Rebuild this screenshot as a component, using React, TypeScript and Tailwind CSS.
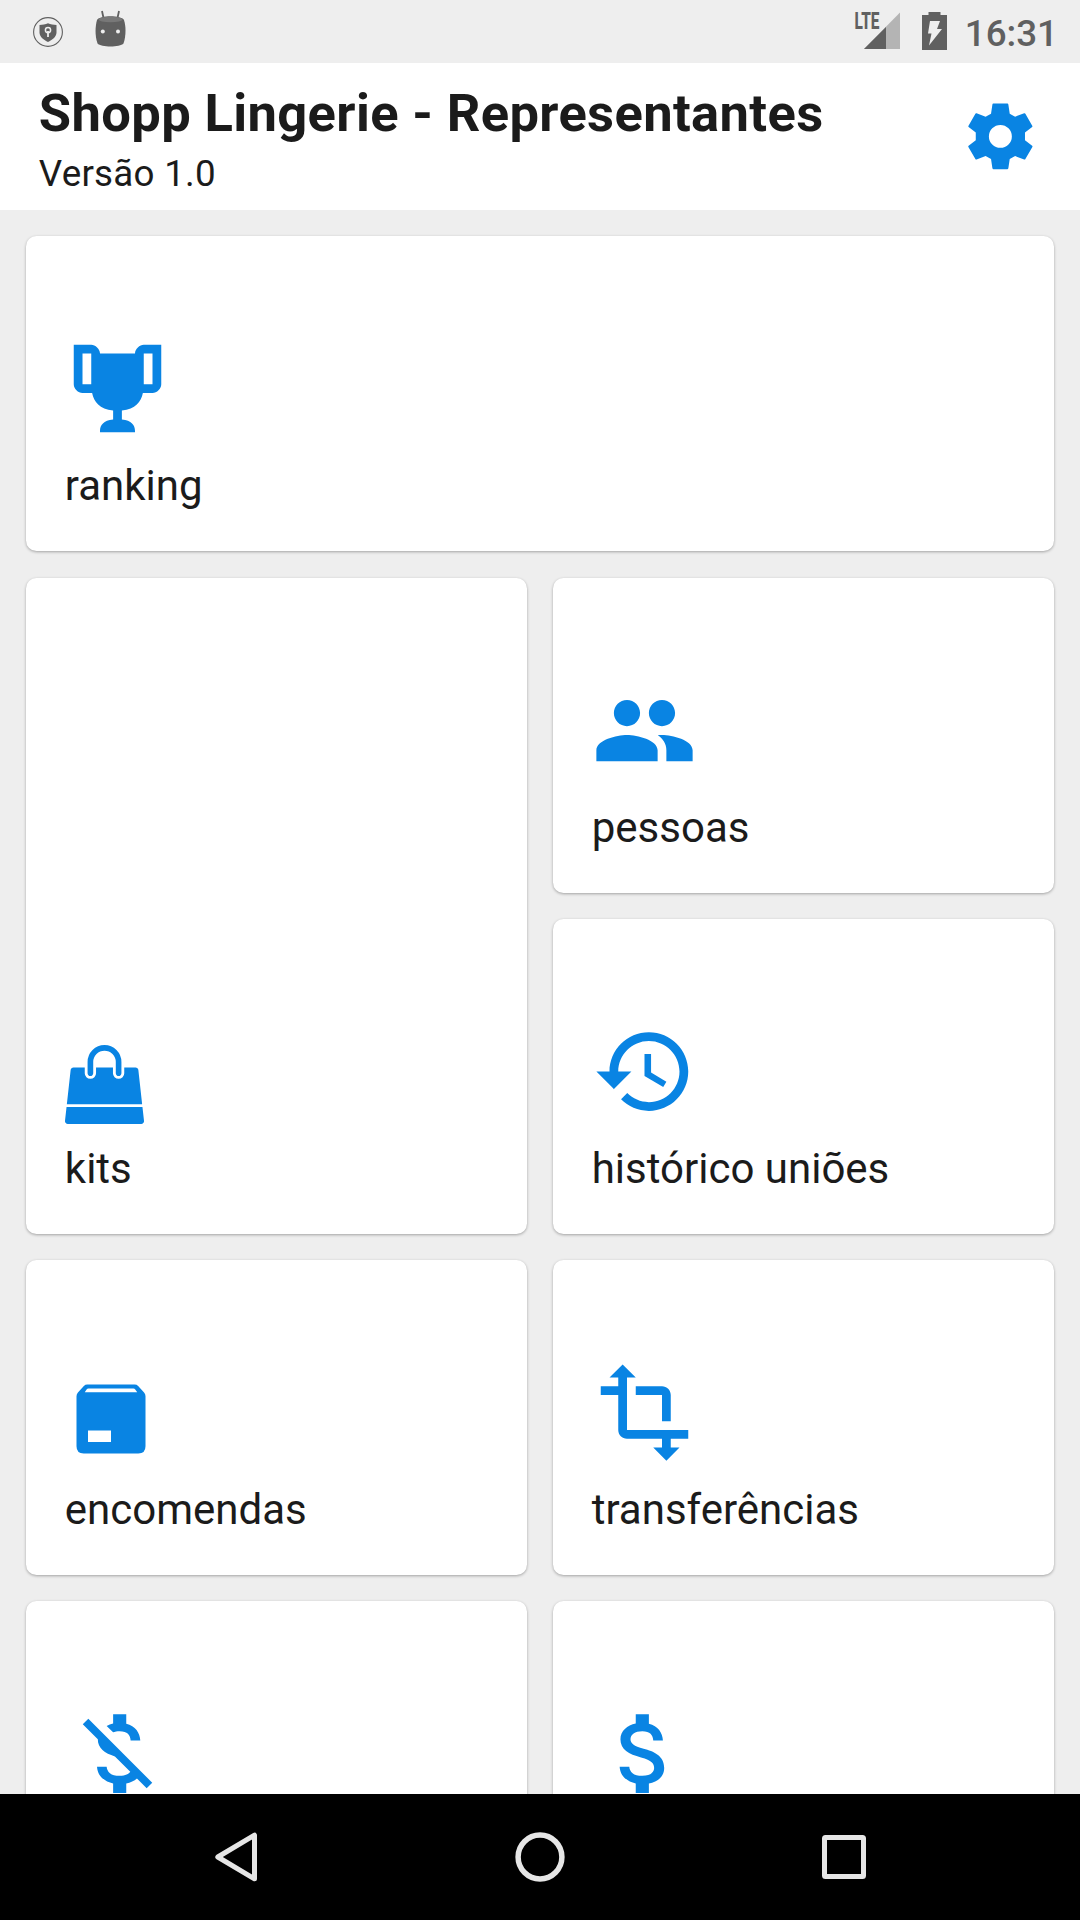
import type { ReactNode } from "react";

type IconProps = {
  d: string;
  viewBox?: string;
  className?: string;
};

type Tile = {
  label: string;
  icon: ReactNode;
  className?: string;
};

function Icon({ d, viewBox = "0 0 24 24", className = "size-[105px]" }: IconProps) {
  return (
    <svg className={className} viewBox={viewBox} fill="currentColor" aria-hidden="true">
      <path fillRule="evenodd" d={d} />
    </svg>
  );
}

const paths = {
  settings:
    "M9.85 2H14.15Q14.4 2 14.43 2.25L14.85 5.1L16.5 6L19.25 4.95Q19.5 4.85 19.62 5.08L21.75 8.8Q21.85 9 21.68 9.15L19.5 10.85V13.15L21.68 14.85Q21.85 15 21.75 15.2L19.62 18.92Q19.5 19.15 19.25 19.05L16.5 18L14.85 18.9L14.43 21.75Q14.4 22 14.15 22H9.85Q9.6 22 9.57 21.75L9.15 18.9L7.5 18L4.75 19.05Q4.5 19.15 4.38 18.92L2.25 15.2Q2.15 15 2.32 14.85L4.5 13.15V10.85L2.32 9.15Q2.15 9 2.25 8.8L4.38 5.08Q4.5 4.85 4.75 4.95L7.5 6L9.15 5.1L9.57 2.25Q9.6 2 9.85 2ZM12 8.5A3.5 3.5 0 0 0 12 15.5A3.5 3.5 0 0 0 12 8.5Z",
  trophy:
    "M18,2C17.1,2 16,3 16,4H8C8,3 6.9,2 6,2H2V11C2,12 3,13 4,13H6.2C6.6,15 7.9,16.7 11,17V19.1C8.8,19.3 8,20.4 8,21.7V22H16V21.7C16,20.4 15.2,19.3 13,19.1V17C16.1,16.7 17.4,15 17.8,13H20C21,13 22,12 22,11V2H18M4,11V4H6V11H4M20,11H18V4H20V11Z",
  people:
    "M16 11c1.66 0 2.99-1.34 2.99-3S17.66 5 16 5c-1.66 0-3 1.34-3 3s1.34 3 3 3zm-8 0c1.66 0 2.99-1.34 2.99-3S9.66 5 8 5C6.34 5 5 6.34 5 8s1.34 3 3 3zm0 2c-2.33 0-7 1.17-7 3.5V19h14v-2.5c0-2.33-4.67-3.5-7-3.5zm8 0c-.29 0-.62.02-.97.05 1.16.84 1.97 1.97 1.97 3.45V19h6v-2.5c0-2.33-4.67-3.5-7-3.5z",
  history:
    "M13 3c-4.97 0-9 4.03-9 9H1l3.89 3.89.07.14L9 12H6c0-3.87 3.13-7 7-7s7 3.13 7 7-3.13 7-7 7c-1.93 0-3.68-.79-4.94-2.06l-1.42 1.42C8.27 19.99 10.51 21 13 21c4.97 0 9-4.03 9-9s-4.03-9-9-9zm-1 5v5l4.28 2.54.72-1.21-3.5-2.08V8H12z",
  bag:
    "M1757 1408l35 313q3 28-16 50-19 21-48 21h-1664q-29 0-48-21-19-22-16-50l35-313h1722zm-93-839l86 775h-1708l86-775q3-24 21-40.5t43-16.5h256v128q0 53 37.5 90.5t90.5 37.5 90.5-37.5 37.5-90.5v-128h384v128q0 53 37.5 90.5t90.5 37.5 90.5-37.5 37.5-90.5v-128h256q25 0 43 16.5t21 40.5zm-384-185v256q0 26-19 45t-45 19-45-19-19-45v-256q0-106-75-181t-181-75-181 75-75 181v256q0 26-19 45t-45 19-45-19-19-45v-256q0-159 112.5-271.5t271.5-112.5 271.5 112.5 112.5 271.5z",
  box:
    "M124 64H388Q399 64 407 72L440 108Q448 117 448 130V408Q448 448 408 448H104Q64 448 64 408V130Q64 117 72 108L105 72Q113 64 124 64ZM130 86Q124 86 120 92L110 107H402L391 92Q387 86 381 86ZM128 320V384H256V320Z",
  transform:
    "M22 18v-2H8V4h2L7 1 4 4h2v2H2v2h4v8c0 1.1.9 2 2 2h8v2h-2l3 3 3-3h-2v-2h4zM10 8h6v6h2V8c0-1.1-.9-2-2-2h-6v2z",
  moneyOff:
    "M12.5 6.9c1.78 0 2.44.85 2.5 2.1h2.21c-.07-1.72-1.12-3.3-3.21-3.81V3h-3v2.16c-.53.12-1.03.3-1.48.54l1.47 1.47c.41-.17.91-.27 1.51-.27zM5.33 4.06L4.06 5.33 7.5 8.77c0 2.08 1.56 3.21 3.91 3.91l3.51 3.51c-.34.48-1.05.91-2.42.91-2.06 0-2.87-.92-2.98-2.1h-2.2c.12 2.19 1.76 3.42 3.68 3.83V21h3v-2.15c.96-.18 1.82-.55 2.45-1.12l2.22 2.22 1.27-1.27L5.33 4.06z",
  money:
    "M11.8 10.9c-2.27-.59-3-1.2-3-2.15 0-1.09 1.01-1.85 2.7-1.85 1.78 0 2.44.85 2.5 2.1h2.21c-.07-1.72-1.12-3.3-3.21-3.81V3h-3v2.16c-1.94.42-3.5 1.68-3.5 3.61 0 2.31 1.91 3.46 4.7 4.13 2.5.6 3 1.48 3 2.41 0 .69-.49 1.79-2.7 1.79-2.06 0-2.87-.92-2.98-2.1h-2.2c.12 2.19 1.76 3.42 3.68 3.83V21h3v-2.15c1.95-.37 3.5-1.5 3.5-3.55 0-2.84-2.43-3.81-4.7-4.4z",
};

const tiles: Tile[] = [
  { label: "ranking", icon: <Icon d={paths.trophy} />, className: "col-span-2" },
  {
    label: "kits",
    icon: <Icon d={paths.bag} viewBox="0 0 1792 1792" className="size-[79px]" />,
    className: "row-span-2",
  },
  { label: "pessoas", icon: <Icon d={paths.people} /> },
  { label: "histórico uniões", icon: <Icon d={paths.history} /> },
  {
    label: "encomendas",
    icon: <Icon d={paths.box} viewBox="0 0 512 512" className="size-[92px]" />,
  },
  { label: "transferências", icon: <Icon d={paths.transform} /> },
  { label: "", icon: <Icon d={paths.moneyOff} /> },
  { label: "", icon: <Icon d={paths.money} /> },
];

function StatusBar() {
  return (
    <div className="flex h-[63px] shrink-0 items-start justify-between bg-[#eeeeee] text-[#606060]">
      <div className="flex gap-8 pt-[10px] pl-[33px]">
        <svg className="mt-[7px] size-[30px]" viewBox="0 0 30 30">
          <circle cx="15" cy="15" r="14.4" fill="none" stroke="currentColor" strokeWidth="1.1" />
          <path
            d="M15 6.3C12.5 7.6 9.5 8 6.5 8v7.5c0 4.5 4.5 7.5 8.5 9.6 4-2.1 8.5-5.1 8.5-9.6V8c-3 0-6-.4-8.5-1.7z"
            fill="currentColor"
          />
          <circle cx="15" cy="13" r="2.6" fill="none" stroke="#eeeeee" strokeWidth="1.5" />
          <path d="M15 14v6" stroke="#eeeeee" strokeWidth="1.8" />
        </svg>
        <svg className="h-[37px] w-[31px]" viewBox="0 0 31 37">
          <path d="M7 1l1.5 7M24 1l-1.5 7" stroke="currentColor" strokeWidth="1.8" />
          <path
            d="M2 10C5 5 26 5 29 10c2.2 7 2 16-.5 23.5C25 37.5 6 37.5 2.5 33.5 0 26 0 17 2 10z"
            fill="currentColor"
          />
          <ellipse cx="15.5" cy="9.5" rx="12" ry="2.8" fill="#787878" />
          <circle cx="7.8" cy="21.5" r="2" fill="#eeeeee" />
          <circle cx="23" cy="21.5" r="2" fill="#eeeeee" />
        </svg>
      </div>
      <div className="flex pr-[22px]">
        <svg className="h-[52px] w-[50px]" viewBox="-2 -10 50 52">
          <path d="M46 2.5V39H10z" fill="#b4b4b4" />
          <path d="M32 17v22H10z" fill="currentColor" />
          <text
            x="0.5"
            y="19"
            fill="currentColor"
            fontFamily="Roboto, sans-serif"
            fontSize="23"
            fontWeight="800"
            textLength="25"
            lengthAdjust="spacingAndGlyphs"
          >
            LTE
          </text>
        </svg>
        <svg className="mt-3 ml-[20px] h-[38px] w-[25px]" viewBox="0 0 25 38">
          <path d="M6.5 0h12v3H25v35H0V3h6.5z" fill="currentColor" />
          <path d="M8 9h10l-3 8h5L7 33.5l2.500-12H6z" fill="#eeeeee" />
        </svg>
        <span className="mt-[11px] ml-[18px] text-[36.75px] leading-[45px] font-medium">16:31</span>
      </div>
    </div>
  );
}

function Header() {
  return (
    <header className="flex h-[147px] shrink-0 items-center justify-between bg-white pr-10 pl-[38.8px]">
      <div className="pt-1">
        <h1 className="text-[52.5px] leading-[62px] font-bold tracking-[0.36px]">
          Shopp Lingerie - Representantes
        </h1>
        <p className="mt-2 text-[36.75px] leading-[44px] tracking-[0.25px]">Versão 1.0</p>
      </div>
      <button type="button" aria-label="settings" className="text-[#0984e3]">
        <Icon d={paths.settings} className="size-[78.75px]" />
      </button>
    </header>
  );
}

function TileCard({ label, icon, className = "" }: Tile) {
  return (
    <button
      type="button"
      className={`flex flex-col items-start justify-end rounded-[10.5px] bg-white pb-[40px] pl-[38.6px] text-left shadow-[0_1px_3px_rgba(0,0,0,0.32)] ${className}`}
    >
      <span className="text-[#0984e3]">{icon}</span>
      <span className="mt-5 h-[50px] text-[42px] leading-[50px]">{label}</span>
    </button>
  );
}

function NavBar() {
  return (
    <nav className="flex h-[126px] shrink-0 items-center justify-center gap-[251px] bg-black text-[#e6e6e6]">
      <svg className="size-[52px]" viewBox="0 0 52 52" fill="none" stroke="currentColor">
        <path d="M6.8 26L43.5 4.2v43.6z" strokeWidth="5" strokeLinejoin="round" />
      </svg>
      <svg className="size-[52px]" viewBox="0 0 52 52" fill="none" stroke="currentColor">
        <circle cx="26" cy="26" r="21.9" strokeWidth="5.5" />
      </svg>
      <svg className="size-[52px]" viewBox="0 0 52 52" fill="none" stroke="currentColor">
        <rect x="7.5" y="6.5" width="39" height="39" rx="1" strokeWidth="5" />
      </svg>
    </nav>
  );
}

export default function App() {
  return (
    <div className="flex h-[1920px] w-[1080px] flex-col overflow-hidden bg-[#eeeeee] font-['Roboto',sans-serif] text-[#1b1b1b]">
      <StatusBar />
      <Header />
      <main className="min-h-0 flex-1 overflow-hidden p-[26.25px]">
        <div className="grid auto-rows-[315px] grid-cols-2 gap-[26.25px]">
          {tiles.map((tile, index) => (
            <TileCard key={index} {...tile} />
          ))}
        </div>
      </main>
      <NavBar />
    </div>
  );
}
